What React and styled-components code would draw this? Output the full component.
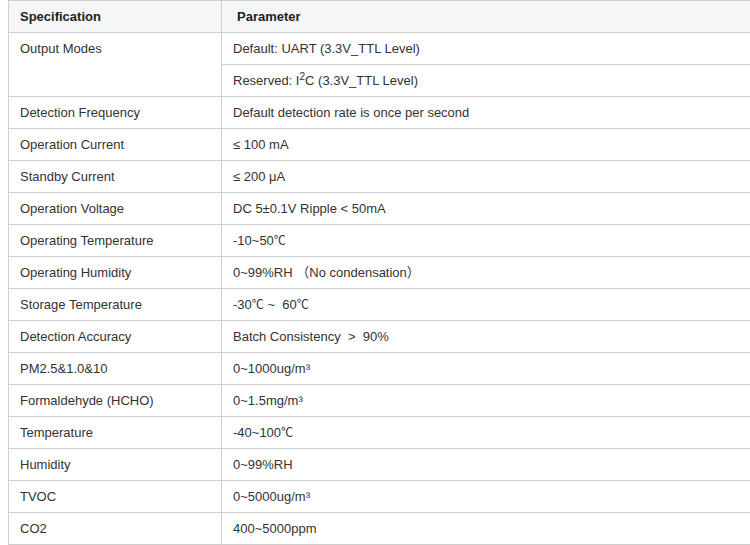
import React from 'react';
import styled, { createGlobalStyle } from 'styled-components';

const GlobalStyle = createGlobalStyle`
  html, body {
    overflow: hidden;
  }
  body {
    margin: 0 0 0 8px;
    background: #fff;
    font-family: "Liberation Sans", Arial, "Noto Sans CJK SC", sans-serif;
    color: #333;
  }
`;

const StyledTable = styled.table`
  width: 760px;
  table-layout: fixed;
  border-collapse: collapse;
  font-size: 13px;
  line-height: 19px;
`;

const HeadRow = styled.tr`
  background: #f5f6f8;
`;

const HeadCell = styled.th`
  border: 1px solid #cfcfcf;
  padding: 6px 11px 6px ${props => (props.$indent ? 15 : 11)}px;
  text-align: left;
  font-weight: bold;
  color: #222;
  height: 19px;
`;

const Cell = styled.td`
  border: 1px solid #cfcfcf;
  padding: 6px 11px;
  vertical-align: top;
`;

const Text = styled.div`
  height: 19px;
  white-space: nowrap;
`;

const Sup = styled.sup`
  font-size: 10px;
  line-height: 0;
  vertical-align: 5px;
`;

const Wide = styled.span`
  font-family: "Noto Sans CJK SC", sans-serif;
  font-size: ${props => (props.$small ? 12 : 13)}px;
  line-height: 0;
`;

const C = () => <Wide $small>℃</Wide>;

const rows = [
  ['Detection Frequency', 'Default detection rate is once per second'],
  ['Operation Current', '≤ 100 mA'],
  ['Standby Current', '≤ 200 μA'],
  ['Operation Voltage', 'DC 5±0.1V Ripple < 50mA'],
  ['Operating Temperature', <>-10~50<C /></>],
  ['Operating Humidity', <>0~99%RH <Wide>（</Wide>No condensation<Wide>）</Wide></>],
  ['Storage Temperature', <>-30<C /> ~&nbsp; 60<C /></>],
  ['Detection Accuracy', <>Batch Consistency &nbsp;&gt;&nbsp; 90%</>],
  ['PM2.5&1.0&10', '0~1000ug/m³'],
  ['Formaldehyde (HCHO)', '0~1.5mg/m³'],
  ['Temperature', <>-40~100<C /></>],
  ['Humidity', '0~99%RH'],
  ['TVOC', '0~5000ug/m³'],
  ['CO2', '400~5000ppm'],
];

const App = () => (
  <>
    <GlobalStyle />
    <StyledTable>
      <colgroup>
        <col style={{ width: 213 }} />
        <col />
      </colgroup>
      <thead>
        <HeadRow>
          <HeadCell>Specification</HeadCell>
          <HeadCell $indent>Parameter</HeadCell>
        </HeadRow>
      </thead>
      <tbody>
        <tr>
          <Cell rowSpan={2}>
            <Text>Output Modes</Text>
          </Cell>
          <Cell>
            <Text>Default: UART (3.3V_TTL Level)</Text>
          </Cell>
        </tr>
        <tr>
          <Cell>
            <Text>
              Reserved: I<Sup>2</Sup>C (3.3V_TTL Level)
            </Text>
          </Cell>
        </tr>
        {rows.map(([spec, param], i) => (
          <tr key={i}>
            <Cell>
              <Text>{spec}</Text>
            </Cell>
            <Cell>
              <Text>{param}</Text>
            </Cell>
          </tr>
        ))}
      </tbody>
    </StyledTable>
  </>
);

export default App;
